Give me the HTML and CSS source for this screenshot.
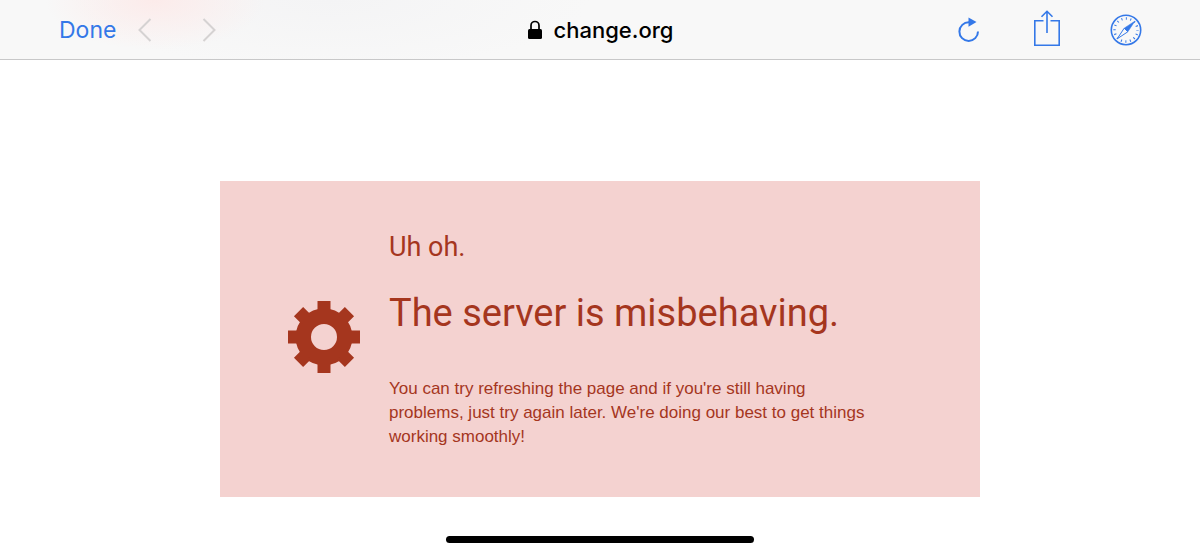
FILE: index.html
```html
<!DOCTYPE html>
<html lang="en">
<head>
<meta charset="utf-8">
<meta name="viewport" content="width=device-width, initial-scale=1">
<title>change.org</title>
<link rel="stylesheet" href="styles.css">
</head>
<body>
<header class="toolbar">
  <div class="toolbar-left">
    <button class="done" type="button">Done</button>
    <nav class="history" aria-label="History">
      <button class="icon-button" type="button" aria-label="Back" disabled>
        <svg width="14" height="24" viewBox="0 0 14 24" fill="none" stroke="currentColor" stroke-width="2"><path d="M12.500 1L1.500 12L12.500 23"/></svg>
      </button>
      <button class="icon-button" type="button" aria-label="Forward" disabled>
        <svg width="14" height="24" viewBox="0 0 14 24" fill="none" stroke="currentColor" stroke-width="2"><path d="M1.500 1L12.500 12L1.500 23"/></svg>
      </button>
    </nav>
  </div>
  <div class="address">
    <svg width="14" height="20" viewBox="0 0 14 20" aria-hidden="true"><path d="M3 10V5.500a4 4 0 0 1 8 0V10" fill="none" stroke="currentColor" stroke-width="1.700"/><rect y="9" width="14" height="10" rx="1.500" fill="currentColor"/></svg>
    <span>change.org</span>
  </div>
  <div class="toolbar-right">
    <button class="icon-button" type="button" aria-label="Reload">
      <svg width="22" height="26" viewBox="0 0 22 26"><path d="M11 5.300A9.300 9.300 0 1 0 20 14.500" fill="none" stroke="currentColor" stroke-width="2"/><path d="M10.500 .5L18.500 5L10.500 9.700Z" fill="currentColor"/></svg>
    </button>
    <button class="icon-button share" type="button" aria-label="Share">
      <svg width="26" height="36" viewBox="0 0 26 36" fill="none" stroke="currentColor" stroke-width="1.600"><path d="M9.500 10.800H.8V35.200H25.200V10.800H16.500M13 23V1.500M7.500 6.800L13 1.300L18.500 6.800"/></svg>
    </button>
    <button class="icon-button" type="button" aria-label="Open in Safari">
      <svg width="32" height="32" viewBox="0 0 32 32" fill="none" stroke="currentColor"><circle cx="16" cy="16" r="14.700" stroke-width="1.600"/><circle cx="16" cy="16" r="11.500" stroke-width="2.400" stroke-dasharray="1 3.517" stroke-dashoffset=".5"/><path d="M24.800 7.200L17.800 17.800L14.200 14.200Z" fill="currentColor" stroke-width=".6"/><path d="M14.200 14.200L7.200 24.800L17.800 17.800Z" fill="#f8f8f8" stroke-width="1"/></svg>
    </button>
  </div>
</header>
<main class="page">
  <section class="notice">
    <svg class="gear" width="72" height="72" viewBox="-36 -36 72 72" aria-hidden="true">
      <circle r="20.700" fill="none" stroke="currentColor" stroke-width="15.400"/>
      <g fill="currentColor">
        <path id="teeth" d="M-6.500 -36H6.500V-25H-6.500ZM-6.500 25H6.500V36H-6.500ZM-36 -6.500H-25V6.500H-36ZM25 -6.500H36V6.500H25Z"/>
        <use href="#teeth" transform="rotate(45)"/>
      </g>
    </svg>
    <div class="message">
      <p class="lead">Uh oh.</p>
      <h1 class="headline">The server is misbehaving.</h1>
      <p class="detail">You can try refreshing the page and if you're still having problems, just try again later. We're doing our best to get things working smoothly!</p>
    </div>
  </section>
</main>
<footer class="home-area"><div class="home-indicator"></div></footer>
</body>
</html>
```
FILE: styles.css
```css
* {
  box-sizing: border-box;
}

body {
  display: flex;
  flex-direction: column;
  min-height: 100vh;
  margin: 0;
  background: #fff;
  color: #000;
  font-family: Inter, "Liberation Sans", sans-serif;
}

.toolbar {
  display: grid;
  grid-template-columns: 1fr auto 1fr;
  align-items: center;
  height: 60px;
  padding: 1px 58px 0 59px;
  border-bottom: 1px solid #c8c8c9;
  background:
    radial-gradient(ellipse 110px 50px at 155px 0, #fcebea, transparent),
    radial-gradient(ellipse 260px 70px at 330px 0, #f4f4f5, transparent),
    #f8f8f8;
}

.toolbar-left,
.toolbar-right,
.history,
.address {
  display: flex;
  align-items: center;
}

.toolbar-left {
  gap: 22px;
}

.history {
  gap: 50px;
}

.toolbar-right {
  justify-content: flex-end;
  gap: 50px;
}

.done,
.icon-button {
  display: block;
  padding: 0;
  border: 0;
  background: none;
  color: #3478e8;
  font: inherit;
}

.done {
  font-size: 23px;
}

.icon-button:disabled {
  color: #d5d2d2;
}

.icon-button svg,
.gear {
  display: block;
}

.share {
  margin-left: 4px;
  padding-bottom: 4px;
}

.address {
  gap: 12px;
  font-size: 22px;
  font-weight: 500;
}

.page {
  flex: 1;
  padding-top: 121px;
}

.notice {
  display: flex;
  align-items: center;
  gap: 29px;
  width: calc(100% - 440px);
  min-width: 640px;
  margin: 0 auto;
  padding: 48px 108px 48px 68px;
  background: #f4d2d0;
  color: #a5361e;
}

.gear {
  flex: none;
  margin-bottom: 4px;
}

.message {
  flex: 1;
}

.lead,
.headline {
  margin: 0;
  font-family: Roboto, sans-serif;
  font-weight: 400;
}

.lead {
  font-size: 27px;
  line-height: 36px;
}

.headline {
  margin: 20px 0 36px;
  font-size: 38px;
  line-height: 56px;
  white-space: nowrap;
}

.detail {
  margin: 0;
  font-family: "Liberation Sans", sans-serif;
  font-size: 17px;
  line-height: 24px;
}

.home-area {
  display: flex;
  justify-content: center;
  padding-bottom: 11px;
}

.home-indicator {
  width: 308px;
  height: 7px;
  border-radius: 4px;
  background: #000;
}
```
